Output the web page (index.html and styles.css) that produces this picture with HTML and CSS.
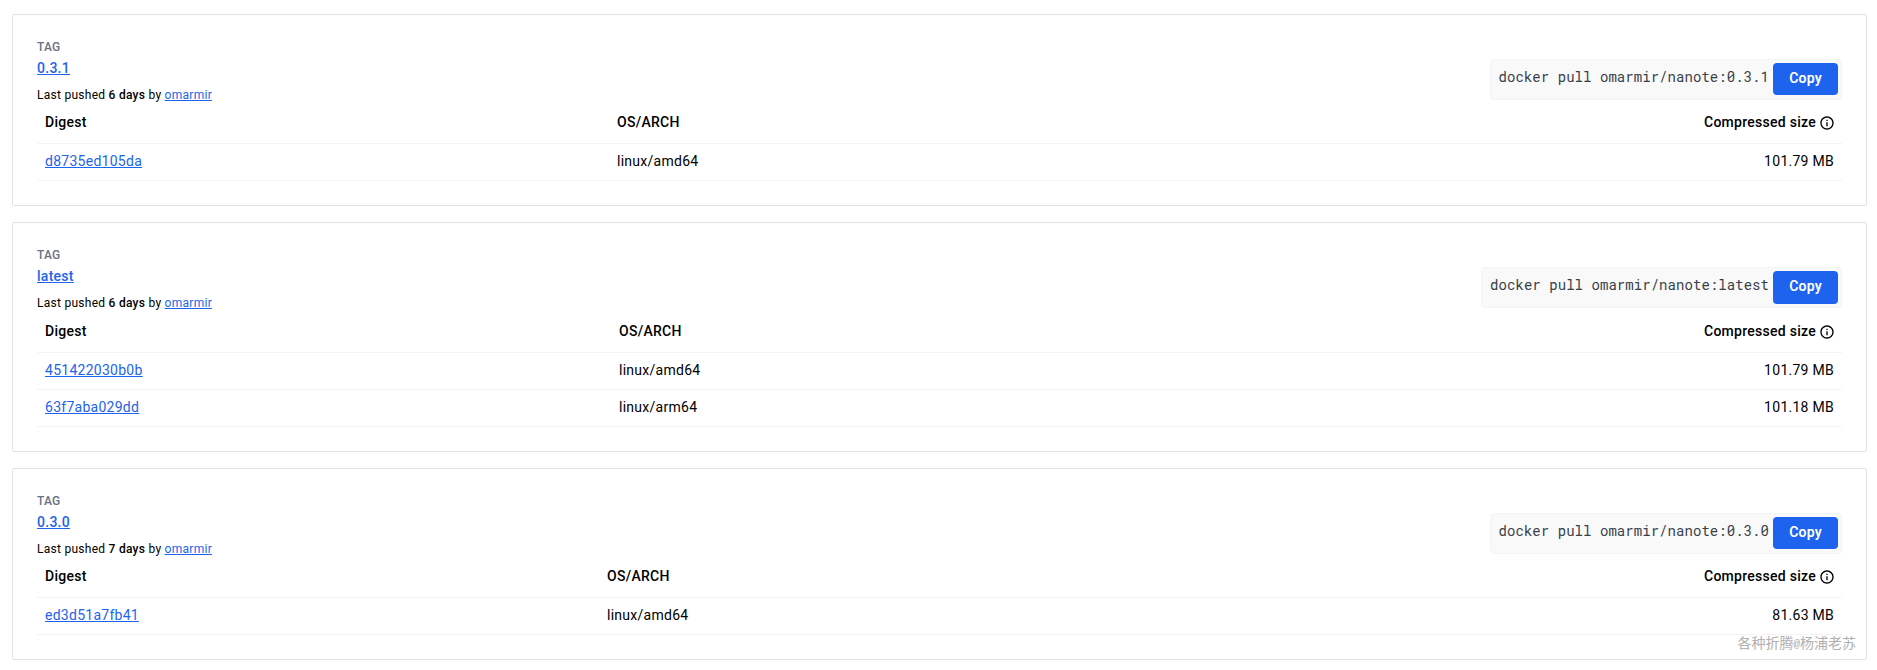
FILE: index.html
```
<!DOCTYPE html>
<html lang="en">
<head>
<meta charset="utf-8">
<title>Tags</title>
<link rel="stylesheet" href="styles.css">
</head>
<body>
<svg class="defs" width="0" height="0"><symbol id="info" viewBox="0 0 24 24"><path d="M11 7h2v2h-2zm0 4h2v6h-2zm1-9C6.48 2 2 6.48 2 12s4.48 10 10 10 10-4.480 10-10S17.520 2 12 2zm0 18c-4.410 0-8-3.590-8-8s3.590-8 8-8 8 3.590 8 8-3.590 8-8 8z"/></symbol></svg>
<main class="tags">
  <section class="card">
    <header class="head">
      <div class="info">
        <div class="label">TAG</div>
        <a class="name" href="#">0.3.1</a>
        <div class="pushed">Last pushed <b>6 days</b> by <a href="#">omarmir</a></div>
      </div>
      <div class="pull"><code>docker pull omarmir/nanote:0.3.1</code><button class="copy">Copy</button></div>
    </header>
    <table class="images">
      <colgroup><col style="width:572px"><col><col></colgroup>
      <tr><th>Digest</th><th>OS/ARCH</th><th class="size"><span class="sizehead">Compressed size<svg class="icon"><use href="#info"/></svg></span></th></tr>
      <tr><td><a href="#">d8735ed105da</a></td><td>linux/amd64</td><td class="size">101.79 MB</td></tr>
    </table>
  </section>
  <section class="card card-multi">
    <header class="head">
      <div class="info">
        <div class="label">TAG</div>
        <a class="name" href="#">latest</a>
        <div class="pushed">Last pushed <b>6 days</b> by <a href="#">omarmir</a></div>
      </div>
      <div class="pull"><code>docker pull omarmir/nanote:latest</code><button class="copy">Copy</button></div>
    </header>
    <table class="images">
      <colgroup><col style="width:574px"><col><col></colgroup>
      <tr><th>Digest</th><th>OS/ARCH</th><th class="size"><span class="sizehead">Compressed size<svg class="icon"><use href="#info"/></svg></span></th></tr>
      <tr><td><a href="#">451422030b0b</a></td><td>linux/amd64</td><td class="size">101.79 MB</td></tr>
      <tr><td><a href="#">63f7aba029dd</a></td><td>linux/arm64</td><td class="size">101.18 MB</td></tr>
    </table>
  </section>
  <section class="card">
    <header class="head">
      <div class="info">
        <div class="label">TAG</div>
        <a class="name" href="#">0.3.0</a>
        <div class="pushed">Last pushed <b>7 days</b> by <a href="#">omarmir</a></div>
      </div>
      <div class="pull"><code>docker pull omarmir/nanote:0.3.0</code><button class="copy">Copy</button></div>
    </header>
    <table class="images">
      <colgroup><col style="width:562px"><col><col></colgroup>
      <tr><th>Digest</th><th>OS/ARCH</th><th class="size"><span class="sizehead">Compressed size<svg class="icon"><use href="#info"/></svg></span></th></tr>
      <tr><td><a href="#">ed3d51a7fb41</a></td><td>linux/amd64</td><td class="size">81.63 MB</td></tr>
    </table>
  </section>
</main>
<div class="watermark">各种折腾<span class="at">@</span>杨浦老苏</div>
</body>
</html>
```
FILE: styles.css
```
* { box-sizing: border-box; }
body {
  margin: 0;
  background: #fff;
  color: #000;
  font-family: Roboto, sans-serif;
  font-size: 14px;
  letter-spacing: 0.27px;
}
a { color: #1d63ed; text-decoration: underline; }
.defs { position: absolute; }
.tags {
  display: flex;
  flex-direction: column;
  gap: 16px;
  padding: 14px 10px 0 12px;
}
.card {
  border: 1px solid #e1e2e6;
  border-radius: 2px;
  padding: 24px;
  height: 192px;
}
.card-multi { height: 230px; }
.head {
  display: flex;
  justify-content: space-between;
  align-items: flex-start;
  height: 66px;
}
.card-multi .head { height: 67px; }
.label {
  font-size: 12px;
  line-height: 16px;
  font-weight: 500;
  letter-spacing: 0.15px;
  color: #677285;
}
.name { display: block; width: fit-content; font-weight: 500; line-height: 24px; margin-top: 1px; }
.pushed { font-size: 12px; line-height: 18px; margin-top: 6px; }
.pushed b { font-weight: 500; }
.pull {
  display: flex;
  align-items: flex-start;
  margin-top: 20px;
  height: 41px;
  padding: 3px 3px 0 8px;
  border: 1px solid #f4f4f6;
  border-radius: 4px;
  background: #f9f9fa;
}
.pull code {
  font-family: "Roboto Mono", "Liberation Mono", monospace;
  font-size: 14px;
  line-height: 20px;
  letter-spacing: 0.05px;
  color: #393f49;
  padding-top: 4px;
  margin-right: 4px;
}
.copy {
  width: 65px;
  height: 32px;
  padding: 0 0 2px;
  border: 0;
  border-radius: 4px;
  background: #1d63ed;
  color: #fff;
  font: 600 14px/30px Roboto, sans-serif;
  letter-spacing: 0.2px;
}
.card-multi .copy { height: 33px; padding-bottom: 3px; }
.images {
  width: 100%;
  table-layout: fixed;
  border-collapse: separate;
  border-spacing: 0;
}
.images th, .images td {
  height: 37px;
  padding: 0 8px 2px;
  text-align: left;
  border-bottom: 1px solid #f3f4f6;
  line-height: 20px;
}
.images th {
  height: 39px;
  padding-bottom: 4px;
  font-weight: 500;
}
.images .size { text-align: right; }
.sizehead { display: inline-flex; align-items: center; gap: 3px; vertical-align: top; }
.icon { width: 16px; height: 16px; fill: #000; margin: 1px -1px 0 0; }
.watermark {
  position: absolute;
  right: 21px;
  bottom: 18px;
  font: 14px/20px "Noto Sans CJK SC", sans-serif;
  letter-spacing: 0;
  color: #b0b0b0;
}
.at { font: 11px/1 "Liberation Mono", monospace; vertical-align: 1px; }
```
